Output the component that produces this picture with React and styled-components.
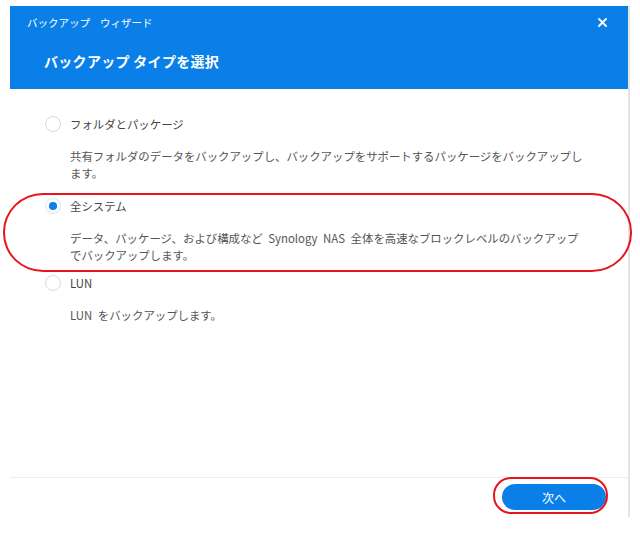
import React, { useState } from "react";
import styled, { createGlobalStyle } from "styled-components";

const Global = createGlobalStyle`
  html, body { margin: 0; padding: 0; background: #fff; }
  body { font-family: "Noto Sans CJK JP", "Noto Sans", sans-serif; }
`;

const Page = styled.div`
  width: 640px;
  height: 533px;
  padding: 6px 0 0 10px;
  box-sizing: border-box;
  position: relative;
  background: #fff;
`;

const Dialog = styled.div`
  width: 618px;
  height: 511px;
  border-right: 2px solid #e4e4e4;
  display: flex;
  flex-direction: column;
`;

const Header = styled.div`
  background: #0a7fe8;
  height: 83px;
  color: #fff;
  display: flex;
  flex-direction: column;
  padding: 0 17px;
  box-sizing: border-box;
`;

const TitleRow = styled.div`
  display: flex;
  align-items: center;
  justify-content: space-between;
  height: 33px;
`;

const Title = styled.div`
  font-size: 10.5px;
  display: flex;
  gap: 10px;
`;

const Close = styled.button`
  background: none;
  border: none;
  padding: 0;
  margin-right: 4px;
  color: #fff;
  display: flex;
  align-items: center;
  cursor: pointer;
`;

const Subtitle = styled.div`
  font-size: 14px;
  font-weight: 700;
  padding-left: 17px;
  margin-top: 12px;
  letter-spacing: 0.3px;
`;

const Body = styled.div`
  flex: 1;
  padding: 25px 0 0 35px;
  display: flex;
  flex-direction: column;
`;

const Option = styled.div`
  display: flex;
  flex-direction: column;
  margin-bottom: ${(p) => p.$gap}px;
`;

const LabelRow = styled.label`
  display: flex;
  align-items: center;
  gap: 9px;
  height: 20px;
  font-size: 11.4px;
  color: #444;
  cursor: pointer;
`;

const Radio = styled.span`
  width: 16px;
  height: 16px;
  border-radius: 50%;
  border: 1px solid ${(p) => (p.$checked ? "#d6e4f2" : "#dcdcdc")};
  box-sizing: border-box;
  display: flex;
  align-items: center;
  justify-content: center;
  background: #fff;
  &::after {
    content: "";
    width: 8px;
    height: 8px;
    border-radius: 50%;
    background: ${(p) => (p.$checked ? "#0a7fe8" : "transparent")};
  }
`;

const Desc = styled.div`
  margin: 14px 0 0 25px;
  font-size: 11.4px;
  line-height: 17px;
  color: #555;
  width: 516px;
  word-spacing: 3px;
`;

const Footer = styled.div`
  border-top: 1px solid #eeeeea;
  height: 40px;
  display: flex;
  justify-content: flex-end;
  align-items: flex-start;
  padding: 6px 22px 0 0;
  box-sizing: border-box;
`;

const NextButton = styled.button`
  width: 104px;
  height: 26px;
  border-radius: 13px;
  border: none;
  background: #0a7fe8;
  color: #fff;
  font-family: inherit;
  font-size: 12px;
  cursor: pointer;
`;

const Mark = styled.div`
  position: absolute;
  border: 2px solid #e8141c;
  box-sizing: border-box;
  pointer-events: none;
  left: ${(p) => p.$x}px;
  top: ${(p) => p.$y}px;
  width: ${(p) => p.$w}px;
  height: ${(p) => p.$h}px;
  border-radius: ${(p) => p.$r};
`;

const options = [
  {
    id: "folder",
    label: "フォルダとパッケージ",
    desc: "共有フォルダのデータをバックアップし、バックアップをサポートするパッケージをバックアップします。",
    gap: 14,
  },
  {
    id: "system",
    label: "全システム",
    desc: "データ、パッケージ、および構成など Synology NAS 全体を高速なブロックレベルのバックアップでバックアップします。",
    gap: 9,
  },
  {
    id: "lun",
    label: "LUN",
    desc: "LUN をバックアップします。",
    gap: 0,
  },
];

export default function App() {
  const [sel, setSel] = useState("system");
  return (
    <Page>
      <Global />
      <Dialog>
        <Header>
          <TitleRow>
            <Title>
              <span>バックアップ</span>
              <span>ウィザード</span>
            </Title>
            <Close aria-label="close">
              <svg width="9" height="9" viewBox="0 0 9 9">
                <path d="M1 1L8 8M8 1L1 8" stroke="#fff" strokeWidth="1.8" strokeLinecap="round" />
              </svg>
            </Close>
          </TitleRow>
          <Subtitle>バックアップ タイプを選択</Subtitle>
        </Header>
        <Body>
          {options.map((o) => (
            <Option key={o.id} $gap={o.gap}>
              <LabelRow onClick={() => setSel(o.id)}>
                <Radio $checked={sel === o.id} />
                {o.label}
              </LabelRow>
              <Desc>{o.desc}</Desc>
            </Option>
          ))}
        </Body>
        <Footer>
          <NextButton>次へ</NextButton>
        </Footer>
      </Dialog>
      <Mark $x={3} $y={193} $w={629} $h={79} $r="40px / 39px" />
      <Mark $x={493} $y={477} $w={115} $h={37} $r="18px" />
    </Page>
  );
}
